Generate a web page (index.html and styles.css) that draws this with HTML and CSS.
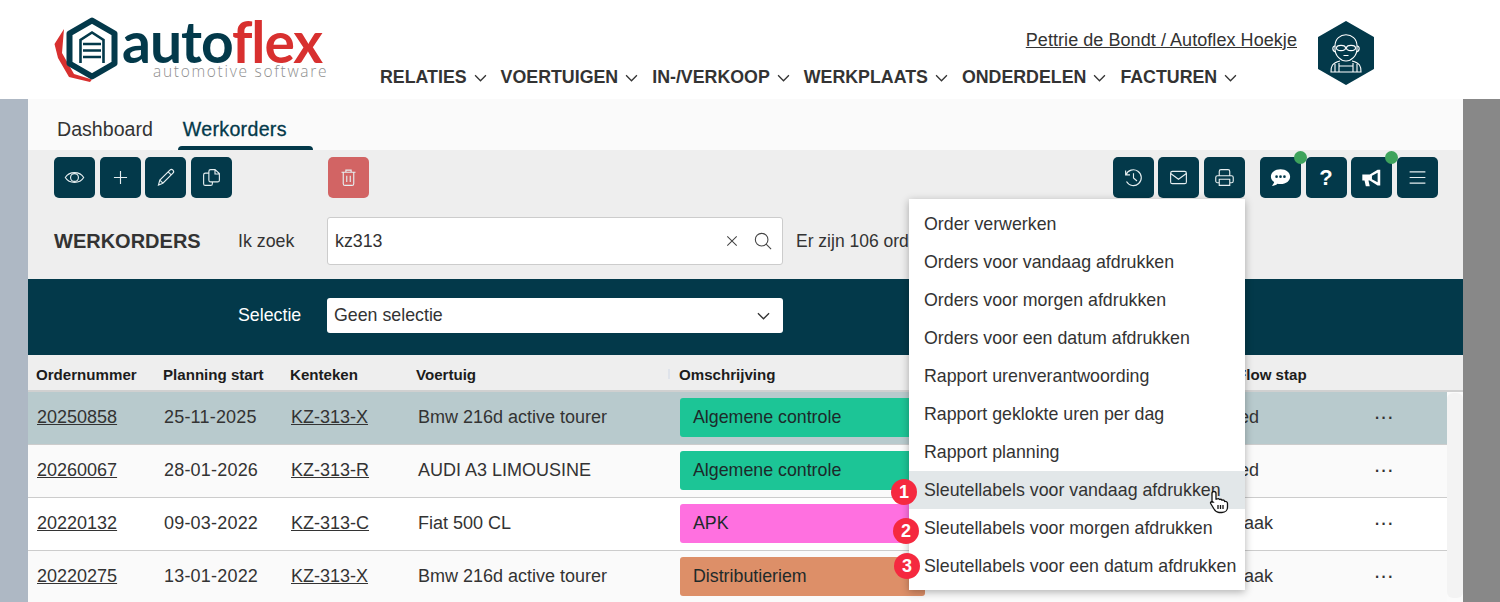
FILE: index.html
```html
<!DOCTYPE html>
<html lang="nl">

<head>
    <meta charset="UTF-8">
    <title>Autoflex - Werkorders</title>
    <link rel="stylesheet" href="styles.css">
</head>

<body>

    <header class="topbar">
        <a class="logo">
            <svg class="logo-mark" viewBox="0 0 66 66" width="66" height="66">
                <path d="M10 12 L0.500 27 L4 41 L15 60 L36 65 L38 62.500 L20 57 L8 36 Z" fill="#d8302f"/>
                <path d="M38 3.500 L60.500 16.500 V46.500 L38 59.500 L15.500 46.500 V16.500 Z" fill="#fff" stroke="#03394a" stroke-width="6" stroke-linejoin="round"/>
                <path d="M26.500 46 V23 L38 15.500 L49.500 23 V46" fill="none" stroke="#03394a" stroke-width="2.600"/>
                <path d="M29 27 H47 M29 33.500 H47 M29 40 H47" fill="none" stroke="#03394a" stroke-width="2.400"/>
            </svg>
            <div class="logo-text">
                <div class="logo-name">auto<span class="logo-red">flex</span></div>
                <div class="logo-sub">automotive software</div>
            </div>
        </a>

        <div class="topbar-right">
            <a class="user-link">Pettrie de Bondt / Autoflex Hoekje</a>
            <nav class="mainnav">
                <span class="navitem">RELATIES <svg class="chev" viewBox="0 0 12 7"><path d="M1 1 L6 6 L11 1"/></svg></span>
                <span class="navitem">VOERTUIGEN <svg class="chev" viewBox="0 0 12 7"><path d="M1 1 L6 6 L11 1"/></svg></span>
                <span class="navitem">IN-/VERKOOP <svg class="chev" viewBox="0 0 12 7"><path d="M1 1 L6 6 L11 1"/></svg></span>
                <span class="navitem">WERKPLAATS <svg class="chev" viewBox="0 0 12 7"><path d="M1 1 L6 6 L11 1"/></svg></span>
                <span class="navitem">ONDERDELEN <svg class="chev" viewBox="0 0 12 7"><path d="M1 1 L6 6 L11 1"/></svg></span>
                <span class="navitem">FACTUREN <svg class="chev" viewBox="0 0 12 7"><path d="M1 1 L6 6 L11 1"/></svg></span>
            </nav>
        </div>

        <svg class="avatar" viewBox="0 0 58 64" width="58" height="64">
            <path d="M29 1 L56 16.500 V47.500 L29 63 L2 47.500 V16.500 Z" fill="#03394a" stroke="#03394a" stroke-width="2" stroke-linejoin="round"/>
            <g fill="none" stroke="#fff" stroke-width="1.100">
                <path d="M18 25 C18 10 40 10 40 25 V28 C40 35 34 40 29 40 C24 40 18 35 18 28 Z"/>
                <path d="M18 25 C15 25 15 30 18.500 31 M40 25 C43 25 43 30 39.500 31"/>
                <ellipse cx="24" cy="27" rx="4.500" ry="2.600"/>
                <ellipse cx="34" cy="27" rx="4.500" ry="2.600"/>
                <path d="M28.500 26.500 H29.500 M26.500 34.500 H31.500"/>
                <path d="M23 40 C15 42 14 45 14 51 H44 C44 45 43 42 35 40 M18 43 V51 M22 42 V51 M36 42 V51 M40 43 V51 M22 45 H36"/>
            </g>
        </svg>
    </header>

    <div class="page">
        <main class="panel">

            <div class="tabs">
                <span class="tab">Dashboard</span>
                <span class="tab tab-active">Werkorders</span>
            </div>

            <div class="toolbar">
                <div class="btn-group">
                    <button class="icon-btn"><svg viewBox="0 0 24 24"><path d="M1.500 12 C6 4.500 18 4.500 22.500 12 C18 19.500 6 19.500 1.500 12 Z"/><circle cx="12" cy="12" r="4.500"/></svg></button>
                    <button class="icon-btn"><svg viewBox="0 0 24 24"><path d="M12 4.500 V19.500 M4.500 12 H19.500"/></svg></button>
                    <button class="icon-btn"><svg viewBox="0 0 24 24"><path d="M4 20.500 L5.500 15 L17 3.500 C18 2.500 19.500 2.500 20.500 3.500 C21.500 4.500 21.500 6 20.500 7 L9 18.500 Z M15 5.500 L18.500 9 M5.500 15 L9 18.500"/></svg></button>
                    <button class="icon-btn"><svg viewBox="0 0 24 24"><path d="M9 7 H5 C4 7 3 8 3 9 V19 C3 20 4 21 5 21 H11 C12 21 13 20 13 19 V17 M9 15 V5 C9 4 10 3 11 3 H16 L21 7.500 V15 C21 16 20 17 19 17 H11 C10 17 9 16 9 15 Z M16 3 V8 H21"/></svg></button>
                </div>
                <button class="icon-btn icon-btn-delete"><svg viewBox="0 0 24 24"><path d="M4 6 H20 M9 6 V3.500 H15 V6 M6 6 V19 C6 20.500 7 21 8 21 H16 C17 21 18 20.500 18 19 V6 M10 10 V17 M14 10 V17"/></svg></button>

                <div class="btn-group group-print">
                    <button class="icon-btn"><svg viewBox="0 0 24 24"><path d="M3 4 V9 H8 M3.500 9 A9 9 0 1 1 4 16.500 M12 7 V12.500 L16 16"/></svg></button>
                    <button class="icon-btn"><svg viewBox="0 0 24 24"><rect x="3" y="5" width="18" height="14" rx="2"/><path d="M3 7.500 L12 14 L21 7.500"/></svg></button>
                    <button class="icon-btn"><svg viewBox="0 0 24 24"><path d="M6 10 V5 C6 4 7 3 8 3 H16 C17 3 18 4 18 5 V10 M6 18 H4 C3 18 2 17 2 16 V12 C2 11 3 10 4 10 H20 C21 10 22 11 22 12 V16 C22 17 21 18 20 18 H18 M6 14 H18 V21 H6 Z"/></svg></button>
                </div>
                <div class="btn-group group-help">
                    <button class="icon-btn has-dot"><svg class="solid" viewBox="0 0 24 24"><path d="M12 2.500 C18.500 2.500 23 6.500 23 11 C23 15.500 18.500 19.500 12 19.500 C10.500 19.500 9.500 19.300 8.500 19 C7 20.500 4.500 21.500 2 21.500 C3.200 20.300 4.500 18.500 4.700 17 C2.500 15.500 1 13.300 1 11 C1 6.500 5.500 2.500 12 2.500 Z"/><circle class="cut" cx="7.500" cy="11" r="1.500"/><circle class="cut" cx="12" cy="11" r="1.500"/><circle class="cut" cx="16.500" cy="11" r="1.500"/></svg></button>
                    <button class="icon-btn icon-btn-text">?</button>
                    <button class="icon-btn has-dot"><svg class="solid" viewBox="0 0 24 24"><path d="M1.500 8.500 H10 L19 3 H22 V21 H19 L10 15.500 H8.500 L10 22 H5.500 L4 15.500 H1.500 Z"/><path class="cut" d="M12.500 10 L19 6.500 V17.500 L12.500 14 Z"/></svg></button>
                    <button class="icon-btn"><svg viewBox="0 0 24 24"><path d="M3 5.500 H21 M3 12 H21 M3 18.500 H21"/></svg></button>
                </div>
            </div>

            <div class="searchrow">
                <h1 class="page-title">WERKORDERS</h1>
                <label class="field-label">Ik zoek</label>
                <div class="searchbox">
                    <span class="searchvalue">kz313</span>
                    <svg class="search-x" viewBox="0 0 14 14"><path d="M1.500 1.500 L12.500 12.500 M12.500 1.500 L1.500 12.500"/></svg>
                    <svg class="search-glass" viewBox="0 0 20 20"><circle cx="8.500" cy="8.500" r="7"/><path d="M13.500 13.500 L19 19"/></svg>
                </div>
                <span class="count">Er zijn 106 orders gevonden</span>
            </div>

            <div class="filterbar">
                <label class="field-label field-label-light">Selectie</label>
                <div class="selectbox">
                    <span>Geen selectie</span>
                    <svg class="select-chev" viewBox="0 0 14 8"><path d="M1 1 L7 7 L13 1"/></svg>
                </div>
            </div>

            <div class="table">
                <div class="row row-head">
                    <span>Ordernummer</span>
                    <span>Planning start</span>
                    <span>Kenteken</span>
                    <span>Voertuig</span>
                    <span class="head-desc">Omschrijving</span>
                    <span>Flow stap</span>
                </div>
                <div class="row row-selected">
                    <a class="cell-link">20250858</a><span class="cell-date">25-11-2025</span><a class="cell-link">KZ-313-X</a><span>Bmw 216d active tourer</span>
                    <span class="pill pill-green">Algemene controle</span><span>Parked</span><span class="dots">...</span>
                </div>
                <div class="row row-alt">
                    <a class="cell-link">20260067</a><span class="cell-date">28-01-2026</span><a class="cell-link">KZ-313-R</a><span>AUDI A3 LIMOUSINE</span>
                    <span class="pill pill-green">Algemene controle</span><span>Parked</span><span class="dots">...</span>
                </div>
                <div class="row">
                    <a class="cell-link">20220132</a><span class="cell-date">09-03-2022</span><a class="cell-link">KZ-313-C</a><span>Fiat 500 CL</span>
                    <span class="pill pill-pink">APK</span><span>Afspraak</span><span class="dots">...</span>
                </div>
                <div class="row row-alt">
                    <a class="cell-link">20220275</a><span class="cell-date">13-01-2022</span><a class="cell-link">KZ-313-X</a><span>Bmw 216d active tourer</span>
                    <span class="pill pill-orange">Distributieriem</span><span>Afspraak</span><span class="dots">...</span>
                </div>
            </div>

            <div class="scrollthumb"></div>

            <!-- afdruk menu, ligt over de tabel -->
            <ul class="printmenu">
                <li>Order verwerken</li>
                <li>Orders voor vandaag afdrukken</li>
                <li>Orders voor morgen afdrukken</li>
                <li>Orders voor een datum afdrukken</li>
                <li>Rapport urenverantwoording</li>
                <li>Rapport geklokte uren per dag</li>
                <li>Rapport planning</li>
                <li class="menu-hover">Sleutellabels voor vandaag afdrukken<span class="step step-1">1</span>
                    <svg class="hand" viewBox="0 0 20 24"><path d="M5 1.500 C6.200 1.500 7 2.300 7 3.500 V9 L8 9 C9 8.500 10 8.700 10.500 9.500 C11.500 9 12.500 9.300 13 10.200 C14.200 9.800 15.300 10.300 15.700 11.500 C17 11 18.500 12 18.500 13.500 V17 C18.500 20 16.500 22.500 13 22.500 H10 C7.500 22.500 6.200 21 5 19 L1.700 13.500 C1 12.200 2.700 10.800 4 12 L3 12 V3.500 C3 2.300 3.800 1.500 5 1.500 Z M9 15 V19 M11.500 15 V19 M14 15 V19" fill="#fff" stroke="#111" stroke-width="1.300"/></svg>
                </li>
                <li>Sleutellabels voor morgen afdrukken<span class="step step-2">2</span></li>
                <li>Sleutellabels voor een datum afdrukken<span class="step step-3">3</span></li>
            </ul>
        </main>
    </div>

</body>

</html>
```

FILE: styles.css
```css
html,
body {
    margin: 0;
    padding: 0;
    height: 100%;
    overflow: hidden;
    font-family: "Liberation Sans", Arial, sans-serif;
    color: #333;
    background-color: #fff;
}

/* Header */
.topbar {
    display: flex;
    height: 99px;
    padding-left: 54px;
    box-sizing: border-box;
    background-color: #fff;
}

.logo {
    display: flex;
    width: 326px;
    padding-top: 17px;
}

.logo-mark {
    flex: none;
}

.logo-text {
    margin-left: 2px;
}

.logo-name {
    margin-top: 2px;
    font-family: Lato, sans-serif;
    font-size: 57px;
    line-height: 44px;
    font-weight: 700;
    letter-spacing: -1.050px;
    color: #03394a;
}

.logo-red {
    color: #d8302f;
}

.logo-sub {
    margin-left: 31px;
    font-family: "Open Sans", sans-serif;
    font-size: 15.500px;
    font-weight: 300;
    line-height: 16px;
    letter-spacing: 1.700px;
    color: #8f8f8f;
}

.topbar-right {
    display: flex;
    flex-direction: column;
    align-items: flex-end;
    width: 917px;
    padding-top: 30px;
    box-sizing: border-box;
}

.user-link {
    font-size: 18px;
    line-height: 21px;
    letter-spacing: 0.060px;
    text-decoration: underline;
    color: #333;
}

.mainnav {
    display: flex;
    gap: 14px;
    margin-top: 16px;
    align-self: flex-start;
}

.navitem {
    display: flex;
    align-items: center;
    gap: 7px;
    font-size: 17.800px;
    line-height: 21px;
    font-weight: 700;
    color: #333;
}

.chev {
    width: 13px;
    height: 8px;
    fill: none;
    stroke: #333;
    stroke-width: 1.200;
}

.avatar {
    margin-top: 21px;
    margin-left: 20px;
}

/* Pagina */
.page {
    height: 503px;
    padding: 0 37px 0 28px;
    background: linear-gradient(to right, #aeb8c4 28px, #888 28px);
    overflow: hidden;
}

.panel {
    position: relative;
    height: 100%;
    background-color: #eee;
}

.tabs {
    display: flex;
    height: 51px;
    padding-left: 24px;
    box-sizing: border-box;
    background-color: #fafafa;
}

.tab {
    padding: 19px 5px 0;
    margin-right: 20px;
    font-size: 19.600px;
    line-height: 23px;
    color: #333;
}

.tab-active {
    position: relative;
    width: 135px;
    margin-left: 0;
    box-sizing: border-box;
    letter-spacing: 0.300px;
    color: #03394a;
    -webkit-text-stroke: 0.3px #03394a;
}

.tab-active::after {
    content: "";
    position: absolute;
    left: 0;
    right: 0;
    bottom: 0;
    height: 4px;
    border-radius: 4px 4px 0 0;
    background-color: #03394a;
}

/* Knoppenbalk */
.toolbar {
    display: flex;
    padding: 7px 0 0 26px;
    height: 48px;
    box-sizing: border-box;
}

.btn-group {
    display: flex;
    gap: 4.600px;
}

.icon-btn {
    position: relative;
    display: flex;
    align-items: center;
    justify-content: center;
    width: 41px;
    height: 41px;
    padding: 0;
    border: none;
    border-radius: 5px;
    background-color: #03394a;
    color: #fff;
}

.icon-btn svg {
    width: 21px;
    height: 21px;
    fill: none;
    stroke: #e6eef0;
    stroke-width: 1.300;
}

.icon-btn svg.solid {
    fill: #fff;
    stroke: none;
}

.icon-btn svg .cut {
    fill: #03394a;
}

.icon-btn-delete {
    margin-left: 96px;
    background-color: #d26464;
}

.icon-btn-text {
    font-family: "Liberation Sans", Arial, sans-serif;
    font-size: 22px;
    font-weight: 700;
}

.group-print {
    margin-left: 744px;
}

.group-help {
    margin-left: 15px;
}

.has-dot::after {
    content: "";
    position: absolute;
    top: -6px;
    right: -6px;
    width: 13px;
    height: 13px;
    border-radius: 50%;
    background-color: #3ea35c;
}

/* Zoeken */
.searchrow {
    display: flex;
    align-items: center;
    height: 81px;
    padding: 7px 0 0 26px;
    box-sizing: border-box;
    margin-top: -1px;
    white-space: nowrap;
}

.page-title {
    width: 184px;
    margin: 0;
    font-size: 20px;
    line-height: 24px;
    font-weight: 700;
    color: #333;
}

.field-label {
    width: 89px;
    font-size: 17.800px;
    line-height: 21px;
    color: #333;
}

.field-label-light {
    color: #fff;
}

.searchbox {
    display: flex;
    align-items: center;
    width: 456px;
    height: 48px;
    padding: 0 10px 0 7px;
    box-sizing: border-box;
    border: 1px solid #ccc;
    border-radius: 3px;
    background-color: #fff;
    font-size: 17.800px;
}

.searchvalue {
    flex: 1;
}

.search-x {
    width: 12px;
    height: 12px;
    margin-right: 16px;
    fill: none;
    stroke: #444;
    stroke-width: 1.200;
}

.search-glass {
    width: 18px;
    height: 18px;
    fill: none;
    stroke: #444;
    stroke-width: 1.200;
}

.count {
    margin-left: 13px;
    font-size: 17.500px;
    color: #333;
}

/* Selectie balk */
.filterbar {
    display: flex;
    align-items: center;
    height: 76px;
    padding: 0 0 3px 210px;
    box-sizing: border-box;
    margin-top: 1px;
    background-color: #03394a;
}

.selectbox {
    display: flex;
    align-items: center;
    justify-content: space-between;
    width: 456px;
    height: 35px;
    padding: 0 13px 0 7px;
    box-sizing: border-box;
    border-radius: 3px;
    background-color: #fff;
    font-size: 17.800px;
    color: #333;
}

.select-chev {
    width: 13px;
    height: 8px;
    fill: none;
    stroke: #333;
    stroke-width: 1.400;
}

/* Tabel */
.table {
    margin-top: 3px;
    height: 300px;
    background-color: #fbfbfb;
}

.row {
    display: grid;
    grid-template-columns: 127px 127px 127px 262px 522px 172px 1fr;
    align-items: center;
    height: 53px;
    margin-right: 16px;
    padding: 0 0 2px 9px;
    box-sizing: border-box;
    border-bottom: 1px solid #ccc;
    background-color: #fff;
    font-size: 18px;
    color: #333;
    white-space: nowrap;
}

.row-head {
    grid-template-columns: 127px 127px 126px 263px 558px 1fr;
    height: 34px;
    padding: 0 0 0 8px;
    margin-right: 0;
    border-bottom: 2px solid #d0d0d0;
    background-color: #eee;
    font-size: 15.100px;
    font-weight: 700;
    color: #1c1c1c;
}

.head-desc {
    position: relative;
}

.head-desc::before {
    content: "";
    position: absolute;
    left: -11px;
    top: 3px;
    width: 2px;
    height: 10px;
    background-color: #dfe3ea;
}

.row-selected {
    background-color: #b8cacd;
}

.row-alt {
    background-color: #fafafa;
}

.cell-date {
    letter-spacing: 0.200px;
}

.cell-link {
    text-decoration: underline;
    color: #333;
}

.pill {
    width: 245px;
    height: 39px;
    padding-left: 13px;
    box-sizing: border-box;
    line-height: 38px;
    border-radius: 3px;
    font-size: 17.800px;
    color: #1d2a2a;
}

.pill-green {
    background-color: #1cc596;
}

.pill-pink {
    background-color: #ff70e0;
}

.pill-orange {
    background-color: #dd8f68;
}

.dots {
    font-size: 22px;
    line-height: 22px;
    margin-top: -10px;
    letter-spacing: 0.5px;
}

.scrollthumb {
    position: absolute;
    left: 1419px;
    top: 294px;
    width: 16px;
    height: 205px;
    border-radius: 6px;
    background-color: #f3f3f3;
}

/* Menu */
.printmenu {
    position: absolute;
    left: 881px;
    top: 100px;
    width: 336px;
    margin: 0;
    padding: 6px 0 5px;
    list-style: none;
    background-color: #fff;
    box-shadow: 0 2px 8px rgba(0, 0, 0, 0.3);
    font-size: 17.800px;
    color: #333;
}

.printmenu li {
    position: relative;
    height: 38px;
    padding-left: 15px;
    line-height: 38px;
    white-space: nowrap;
}

.menu-hover {
    background-color: #e2e7e9;
}

.step {
    position: absolute;
    width: 26px;
    height: 26px;
    border-radius: 50%;
    background-color: #f5293f;
    color: #fff;
    font-size: 18px;
    font-weight: 700;
    line-height: 26px;
    text-align: center;
}

.step-1 {
    left: -18px;
    top: 8px;
}

.step-2 {
    left: -16px;
    top: 9px;
}

.step-3 {
    left: -15px;
    top: 6px;
}

.hand {
    position: absolute;
    left: 300px;
    top: 19px;
    width: 20px;
    height: 24px;
}
```
